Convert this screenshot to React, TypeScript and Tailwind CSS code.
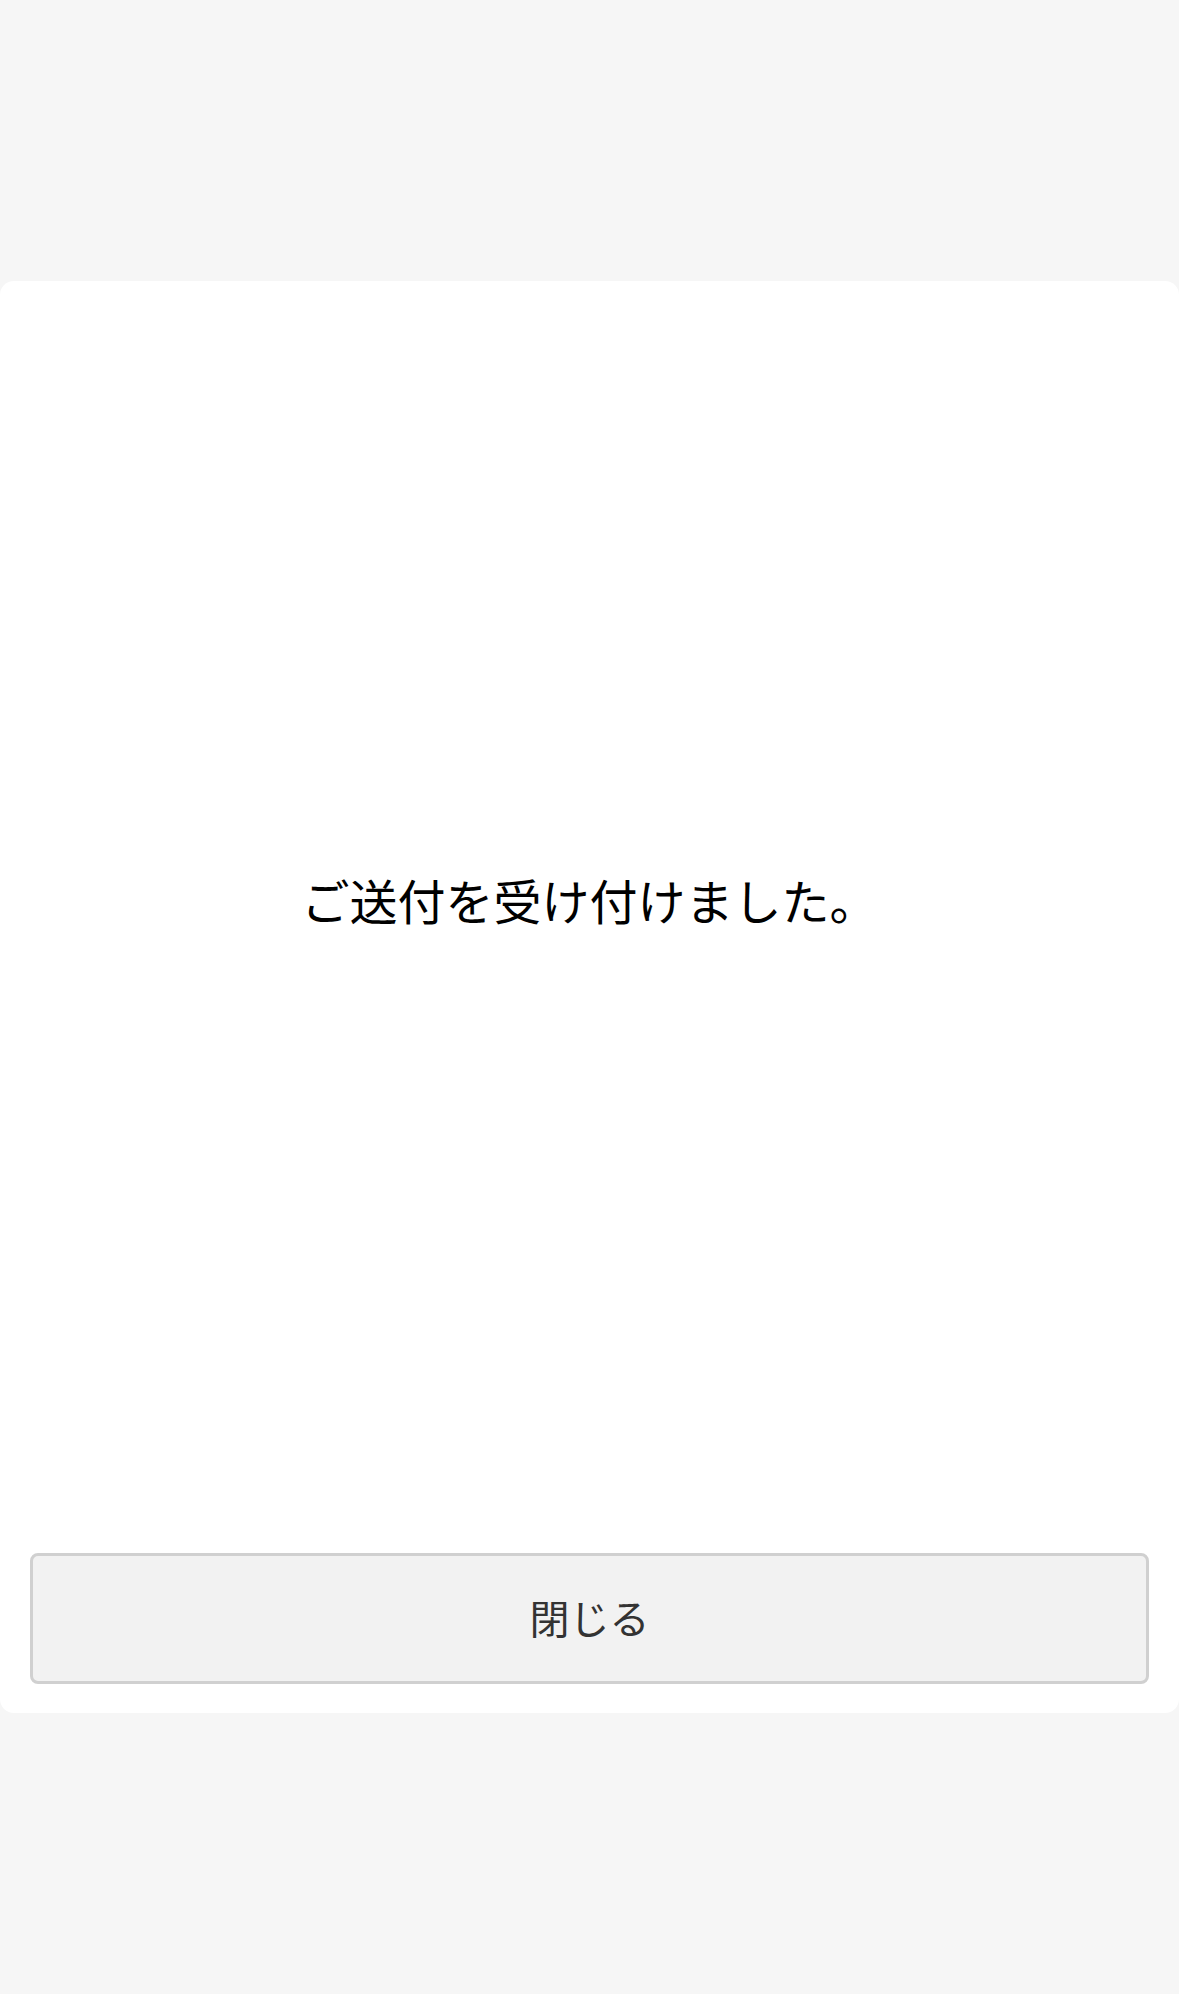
export default function App() {
  return (
    <div
      className="flex h-[1994px] w-full items-center bg-[#f6f6f6]"
      style={{ fontFamily: '"Noto Sans CJK JP", "Noto Sans", sans-serif' }}
    >
      <div className="flex h-[1432px] w-full flex-col rounded-[14px] bg-white">
        {/* メッセージ */}
        <div className="flex h-[1236px] items-center justify-center">
          <p className="text-[48px] leading-none text-black">ご送付を受け付けました。</p>
        </div>

        <div className="mt-[36px] px-[30px]">
          <button
            type="button"
            className="flex h-[131px] w-full items-center justify-center rounded-[8px] border-[3px] border-[#d0d0d0] bg-[#f2f2f2] pb-[4px] text-[40px] leading-none text-[#333333]"
          >
            閉じる
          </button>
        </div>
      </div>
    </div>
  );
}
